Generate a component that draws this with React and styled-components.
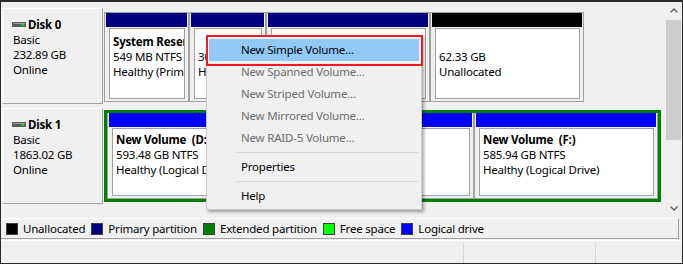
import React from 'react';
import styled, { createGlobalStyle } from 'styled-components';

const GlobalStyle = createGlobalStyle`
  html, body {
    margin: 0;
    padding: 0;
    background: #f0f0f0;
  }
  body {
    font-family: "Noto Sans", "Open Sans", sans-serif;
    font-size: 11.5px;
    letter-spacing: -0.2px;
    color: #000;
  }
  * {
    box-sizing: border-box;
  }
`;

const Window = styled.div`
  position: relative;
  width: 683px;
  height: 264px;
  border: 1px solid #2a2a2a;
  border-top-width: 2px;
  background: #f0f0f0;
  display: flex;
  flex-direction: column;
  overflow: hidden;
`;

const GraphArea = styled.div`
  height: 215px;
  display: flex;
`;

const DiskList = styled.div`
  flex: 1;
  padding: 6px 0 0 1px;
  display: flex;
  flex-direction: column;
  gap: 4px;
`;

const DiskRow = styled.div`
  height: 96px;
  display: flex;
  gap: 1px;
`;

const DiskLabel = styled.div`
  width: 101px;
  height: 96px;
  border: 1px solid;
  border-color: #fff #a0a0a0 #a0a0a0 #fff;
  padding: 8px 0 0 9px;
  line-height: 15px;
`;

const DiskTitle = styled.div`
  display: flex;
  align-items: center;
  gap: 2px;
  font-weight: bold;
  height: 15px;
`;

const LabelLine = styled.div`
  padding-left: 1px;
`;

const Partitions = styled.div`
  display: flex;
  align-items: flex-start;
  padding-top: 4px;
`;

const Cell = styled.div`
  width: ${p => p.$w}px;
  height: ${p => p.$h}px;
  border: 1px solid #a0a0a0;
  border-top-width: ${p => (p.$flat ? 0 : 1)}px;
  padding: 0 1px;
  display: flex;
  flex-direction: column;
`;

const Bar = styled.div`
  height: 14px;
  flex: none;
  background: ${p => p.$color};
`;

const Box = styled.div`
  flex: 1;
  margin: 1px 2px 2px 3px;
  background: #fff;
  border: 1px solid #a0a0a0;
  padding: ${p => p.$top}px 0 0 3px;
  line-height: 15px;
  overflow: hidden;
  white-space: pre;
`;

const Name = styled.div`
  font-weight: bold;
  height: 15px;
`;

const Extended = styled.div`
  width: 557px;
  height: 92px;
  margin-top: 2px;
  border: 3px solid #008000;
  display: flex;
`;

const ScrollTrack = styled.div`
  width: 17px;
  display: flex;
  flex-direction: column;
  align-items: center;
`;

const Arrow = styled.div`
  height: 17px;
  width: 17px;
  flex: none;
  display: flex;
  align-items: center;
  justify-content: center;
`;

const Thumb = styled.div`
  width: 15px;
  height: 120px;
  margin: 1px 1px 0 0;
  background: #cdcdcd;
`;

const Spacer = styled.div`
  flex: 1;
`;

const Legend = styled.div`
  height: 21px;
  margin: 1px 3px 1px 0;
  border-top: 1px solid #fff;
  border-bottom: 1px solid #a0a0a0;
  border-right: 1px solid #a0a0a0;
  display: flex;
  align-items: center;
  padding-left: 5px;
`;

const LegendItem = styled.div`
  display: flex;
  align-items: center;
  margin-right: 6px;
`;

const Swatch = styled.span`
  width: 12px;
  height: 12px;
  margin-right: 5px;
  background: ${p => p.$color};
  border: 1px solid #404040;
`;

const StatusBar = styled.div`
  height: 23px;
  display: flex;
  border-top: 1px solid #fff;
`;

const StatusPane = styled.div`
  width: ${p => (p.$w ? `${p.$w}px` : 'auto')};
  flex: ${p => (p.$w ? 'none' : 1)};
  margin-top: 2px;
  border-left: ${p => (p.$first ? 'none' : '1px solid #d7d7d7')};
`;

const Menu = styled.div`
  position: absolute;
  left: 205px;
  top: 33px;
  width: 216px;
  padding: 3px 2px 2px;
  background: #f0f0f0;
  border: 1px solid #cccccc;
  box-shadow: 2px 2px 3px rgba(0, 0, 0, 0.35);
`;

const MenuItem = styled.div`
  height: 22px;
  line-height: 22px;
  padding-left: 32px;
  color: ${p => (p.$disabled ? '#6d6d6d' : '#000')};
  background: ${p => (p.$active ? '#91c9f7' : 'transparent')};
`;

const MenuSeparator = styled.div`
  height: 7px;
  display: flex;
  align-items: center;
  padding: 0 1px 0 28px;

  &::after {
    content: '';
    flex: 1;
    height: 1px;
    background: #d7d7d7;
  }
`;

const Highlight = styled.div`
  position: absolute;
  left: 205px;
  top: 33px;
  width: 217px;
  height: 31px;
  border: 2px solid #ed1c24;
`;

const DiskIcon = () => (
  <svg width="14" height="5" viewBox="0 0 14 5">
    <rect x="0" y="0" width="14" height="5" fill="#5a5a5a" />
    <rect x="1" y="1" width="12" height="1" fill="#9c9c9c" />
    <rect x="9" y="2" width="3" height="2" fill="#20c020" />
  </svg>
);

const Chevron = ({ down }) => (
  <svg width="8" height="5" viewBox="0 0 8 5">
    <path
      d={down ? 'M0.5 0.5 L4 4 L7.5 0.5' : 'M0.5 4.5 L4 1 L7.5 4.5'}
      fill="none"
      stroke="#606060"
      strokeWidth="1.3"
    />
  </svg>
);

const disk0 = [
  { w: 85, color: '#000080', lines: ['System Reserved', '549 MB NTFS', 'Healthy (Primary Partition)'] },
  { w: 77, color: '#000080', lines: ['', '30.00 GB NTFS', 'Healthy (Boot, Page File)'] },
  { w: 164, color: '#000080', lines: ['New Volume  (E:)', '140.00 GB NTFS', 'Healthy (Primary Partitia'] },
  { w: 154, color: '#000000', lines: ['', '62.33 GB', 'Unallocated'] },
];

const disk1 = [
  { w: 367, lines: ['New Volume  (D:)', '593.48 GB NTFS', 'Healthy (Logical Drive)'] },
  { w: 184, lines: ['New Volume  (F:)', '585.94 GB NTFS', 'Healthy (Logical Drive)'] },
];

const legend = [
  { color: '#000000', label: 'Unallocated' },
  { color: '#000080', label: 'Primary partition' },
  { color: '#008000', label: 'Extended partition' },
  { color: '#00ff00', label: 'Free space' },
  { color: '#0000ff', label: 'Logical drive' },
];

const menu = [
  { label: 'New Simple Volume...', active: true },
  { label: 'New Spanned Volume...', disabled: true },
  { label: 'New Striped Volume...', disabled: true },
  { label: 'New Mirrored Volume...', disabled: true },
  { label: 'New RAID-5 Volume...', disabled: true },
  { sep: true },
  { label: 'Properties' },
  { sep: true },
  { label: 'Help' },
];

const Label = ({ name, size }) => (
  <DiskLabel>
    <DiskTitle>
      <DiskIcon />
      <span>{name}</span>
    </DiskTitle>
    <LabelLine>Basic</LabelLine>
    <LabelLine>{size}</LabelLine>
    <LabelLine>Online</LabelLine>
  </DiskLabel>
);

const PartText = ({ lines, top }) => (
  <Box $top={top}>
    <Name>{lines[0]}</Name>
    <div>{lines[1]}</div>
    <div>{lines[2]}</div>
  </Box>
);

export default function App() {
  return (
    <>
      <GlobalStyle />
      <Window>
        <GraphArea>
          <DiskList>
            <DiskRow>
              <Label name="Disk 0" size="232.89 GB" />
              <Partitions>
                {disk0.map((p, i) => (
                  <Cell key={i} $w={p.w} $h={90}>
                    <Bar $color={p.color} />
                    <PartText lines={p.lines} top={5} />
                  </Cell>
                ))}
              </Partitions>
            </DiskRow>
            <DiskRow>
              <Label name="Disk 1" size="1863.02 GB" />
              <Extended>
                {disk1.map((p, i) => (
                  <Cell key={i} $w={p.w} $h={86} $flat>
                    <Bar $color="#0000ff" />
                    <PartText lines={p.lines} top={3} />
                  </Cell>
                ))}
              </Extended>
            </DiskRow>
          </DiskList>
          <ScrollTrack>
            <Arrow><Chevron /></Arrow>
            <Thumb />
            <Spacer />
            <Arrow><Chevron down /></Arrow>
          </ScrollTrack>
        </GraphArea>
        <Legend>
          {legend.map(l => (
            <LegendItem key={l.label}>
              <Swatch $color={l.color} />
              <span>{l.label}</span>
            </LegendItem>
          ))}
        </Legend>
        <StatusBar>
          <StatusPane $first />
          <StatusPane $w={132} />
          <StatusPane $w={87} />
        </StatusBar>
        <Menu>
          {menu.map((m, i) =>
            m.sep ? (
              <MenuSeparator key={i} />
            ) : (
              <MenuItem key={i} $active={m.active} $disabled={m.disabled}>
                {m.label}
              </MenuItem>
            )
          )}
        </Menu>
        <Highlight />
      </Window>
    </>
  );
}
